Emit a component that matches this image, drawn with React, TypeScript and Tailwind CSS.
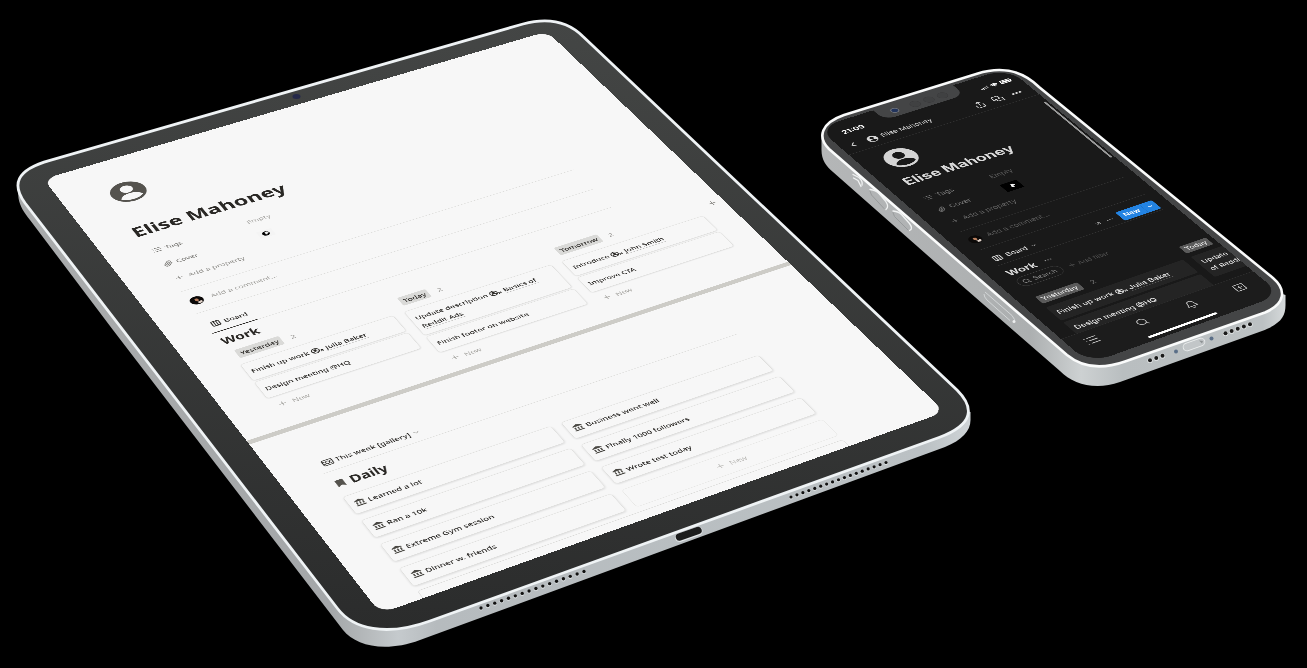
import { useLayoutEffect, useRef, useState, type CSSProperties, type ReactNode } from "react";
import {
  ArrowUpRight,
  Bell,
  ChevronDown,
  ChevronLeft,
  Columns3,
  Ellipsis,
  List,
  MessagesSquare,
  Paperclip,
  Plus,
  Search,
  Share,
  SquarePlus,
  Wifi,
} from "lucide-react";
import { FaBatteryFull, FaBookmark } from "react-icons/fa";
import { MdAccountBalance } from "react-icons/md";

type Point = [number, number];
type Quad = [Point, Point, Point, Point];

const SCENE_WIDTH = 1307;

/* Corners in scene units: top left, top right, bottom right, bottom left. */
const TABLET: Quad = [[43.5, 179], [547, 31.5], [945, 412], [380.5, 613.5]];
const PHONE: Quad = [[817.6, 127.8], [1007.6, 68.1], [1281.4, 294.6], [1089.4, 363.6]];

/* Perspective matrix that lays a flat w × h panel onto four corners. */
function project(w: number, h: number, quad: Quad, scale: number): CSSProperties {
  const [[x0, y0], [x1, y1], [x2, y2], [x3, y3]] = quad.map(([x, y]) => [x * scale, y * scale]);
  const dx1 = x1 - x2, dx2 = x3 - x2, sx = x0 - x1 + x2 - x3;
  const dy1 = y1 - y2, dy2 = y3 - y2, sy = y0 - y1 + y2 - y3;
  const den = dx1 * dy2 - dx2 * dy1;
  const g = (sx * dy2 - dx2 * sy) / den;
  const k = (dx1 * sy - sx * dy1) / den;
  const m = [
    (x1 - x0 + g * x1) / w, (y1 - y0 + g * y1) / w, 0, g / w,
    (x3 - x0 + k * x3) / h, (y3 - y0 + k * y3) / h, 0, k / h,
    0, 0, 1, 0,
    x0, y0, 0, 1,
  ];
  return { transform: `matrix3d(${m.join(",")})` };
}

function UserCircle({ className, ink }: { className: string; ink: string }) {
  return (
    <svg viewBox="0 0 72 72" className={className} aria-hidden="true">
      <circle cx="36" cy="36" r="36" fill="currentColor" />
      <circle cx="36" cy="26" r="13" fill={ink} />
      <path d="M13 56c4-10 13-14 23-14s19 4 23 14c-6 6-14 9-23 9s-17-3-23-9z" fill={ink} />
    </svg>
  );
}

function Portrait({ className }: { className: string }) {
  return (
    <svg viewBox="0 0 28 28" className={className} aria-hidden="true">
      <circle cx="14" cy="14" r="14" fill="#0b0908" />
      <path d="M12 8c5-2 7 2 6 6-1 4-4 5-6 2-2-3-2-6 0-8z" fill="#b9805f" />
      <path d="M13 19c3 1 6 0 9-2l2 5c-4 4-7 4-10 2z" fill="#e3d5cc" />
    </svg>
  );
}

function CoverThumb({ className }: { className: string }) {
  return (
    <svg viewBox="0 0 34 26" className={className} role="img" aria-label="Cover">
      <rect width="34" height="26" fill="currentColor" />
      <circle cx="17" cy="13" r="8" fill="#000" />
      <path d="M16 8c4-2 8 0 8 4l-4 1 0 4c-4 1-6-1-4-5z" fill="#f1f1f1" />
    </svg>
  );
}

function GalleryIcon({ className }: { className: string }) {
  return (
    <svg viewBox="0 0 20 20" className={className} fill="none" stroke="currentColor" strokeWidth="1.600" aria-hidden="true">
      <rect x="1.500" y="3" width="17" height="14" rx="2.500" />
      <circle cx="10" cy="10" r="3.500" />
      <path d="M2 7h4M14 7h4M2 13h4M14 13h4" />
    </svg>
  );
}

function Mention({ children }: { children: ReactNode }) {
  return (
    <a href="#mention" className="whitespace-normal">
      <span className="mr-1 inline-flex items-end align-[-3px]">
        <svg viewBox="0 0 18 18" className="size-4" aria-hidden="true">
          <circle cx="9" cy="9" r="7.500" fill="none" stroke="currentColor" strokeWidth="2" />
          <circle cx="9" cy="7" r="3" fill="currentColor" />
          <path d="M3 14c3-5 9-5 12 0" fill="none" stroke="currentColor" strokeWidth="2" />
        </svg>
        <ArrowUpRight className="-ml-0.5 size-[9px]" strokeWidth={4} />
      </span>
      <span className="border-b border-current/30">{children}</span>
    </a>
  );
}

/* ---------- Tablet ---------- */

function PropertyRow({ icon, name, children }: { icon: ReactNode; name: string; children?: ReactNode }) {
  return (
    <div className="flex h-12 items-center text-[15px] text-[#73726e]">
      <div className="flex w-[180px] items-center gap-1.5">
        {icon}
        <span>{name}</span>
      </div>
      {children}
    </div>
  );
}

function BoardColumn({ title, cards }: { title: string; cards: { id: string; body: ReactNode }[] }) {
  return (
    <section className="w-[284px] shrink-0">
      <div className="flex items-center gap-4 pl-2">
        <h3 className="h-[26px] rounded-sm bg-[#dadad8] px-1.5 text-[15px] leading-[26px] font-medium text-[#2a2825]">{title}</h3>
        <span className="text-[15px] text-[#9b9a97]">2</span>
      </div>
      <div className="mt-4 flex flex-col gap-1">
        {cards.map((card) => (
          <article
            key={card.id}
            className="rounded-md border border-[#dfdfdd] px-2 py-3 text-[15px] leading-[26px] font-medium text-[#2a2825] shadow-[0_1px_3px_rgba(15,15,15,0.12)]"
          >
            {card.body}
          </article>
        ))}
      </div>
      <button type="button" className="flex h-12 items-center gap-2 pl-2 text-[15px] text-[#a5a4a0]">
        <Plus className="size-[18px]" /> New
      </button>
    </section>
  );
}

const BOARD = [
  {
    title: "Yesterday",
    cards: [
      { id: "finish", body: <>Finish up work <Mention>Julia Baker</Mention></> },
      { id: "design", body: "Design meeting @HQ" },
    ],
  },
  {
    title: "Today",
    cards: [
      { id: "update", body: <>Update description <Mention>Basics of Reddit Ads</Mention></> },
      { id: "footer", body: "Finish footer on website" },
    ],
  },
  {
    title: "Tomorrow",
    cards: [
      { id: "intro", body: <>Introduce <Mention>John Smith</Mention></> },
      { id: "cta", body: "Improve CTA" },
    ],
  },
];

const GALLERY = [
  "Learned a lot",
  "Business went well",
  "Ran a 10k",
  "Finally 1000 followers",
  "Extreme Gym session",
  "Wrote test today",
  "Dinner w. friends",
];

function TabletPage() {
  return (
    <div className="flex h-full flex-col bg-[#f7f7f7] pt-20 font-['Noto_Sans','Open_Sans',sans-serif] text-[#2a2825]">
      <header className="mr-[184px] ml-[72px]">
        <UserCircle className="ml-3 size-[65px] text-[#55534e]" ink="#f7f7f7" />
        <h1 className="mt-[66px] text-[41px] leading-[52px] font-bold">Elise Mahoney</h1>
        <div className="mt-[18px] border-b border-[#dcdcda] pb-4 pl-2">
          <PropertyRow icon={<List className="size-[18px]" />} name="Tags">
            <span className="text-[#aaa9a6]">Empty</span>
          </PropertyRow>
          <PropertyRow icon={<Paperclip className="size-[18px]" />} name="Cover">
            <CoverThumb className="h-[22px] w-[30px] text-[#f4f4f4]" />
          </PropertyRow>
          <button type="button" className="flex h-12 items-center gap-2 text-[15px] text-[#91908c]">
            <Plus className="size-[18px]" /> Add a property
          </button>
        </div>
        <div className="flex h-[72px] items-center gap-3.5 border-b border-[#dcdcda] pl-1">
          <Portrait className="size-6" />
          <input
            aria-label="Add a comment on tablet"
            placeholder="Add a comment..."
            className="flex-1 bg-transparent text-[15px] outline-none placeholder:text-[#9d9c98]"
          />
        </div>
        <nav className="flex h-[66px] items-end border-b border-[#dcdcda]">
          <button type="button" className="-mb-px flex h-12 items-center gap-1.5 border-b-2 border-[#2a2825] px-2 text-[15px] font-medium">
            <Columns3 className="size-[18px]" strokeWidth={2.5} /> Board
          </button>
        </nav>
      </header>

      <section className="ml-[76px]">
        <h2 className="mt-2.5 mb-3.5 text-[26px] leading-9 font-bold">Work</h2>
        <div className="flex gap-5">
          {BOARD.map((column) => (
            <BoardColumn key={column.title} {...column} />
          ))}
          <button type="button" aria-label="Add a group" className="flex h-8 items-center pl-1 text-[#7d7c78]">
            <Plus className="size-5" />
          </button>
        </div>
      </section>

      <hr className="mt-3 h-[11px] shrink-0 border-0 bg-[#cdccc7]" />

      <section className="mt-20 mr-[184px] ml-[72px]">
        <nav className="flex h-12 items-center border-b border-[#dcdcda] pl-2">
          <button type="button" className="flex items-center gap-1 text-[15px] font-medium">
            <GalleryIcon className="size-5" /> This week [gallery]
            <ChevronDown className="size-4 text-[#a5a4a0]" />
          </button>
        </nav>
        <h2 className="flex h-[68px] items-center gap-2 pl-1 text-[26px] font-bold">
          <FaBookmark className="size-[18px] text-[#55534e]" /> Daily
        </h2>
        <div className="grid grid-cols-2 gap-x-[18px] gap-y-[17px]">
          {GALLERY.map((name) => (
            <article
              key={name}
              className="flex h-[50px] items-center gap-1 rounded-md border border-[#dfdfdd] px-2 text-[15px] font-medium shadow-[0_2px_4px_rgba(15,15,15,0.13)]"
            >
              <MdAccountBalance className="size-5 text-[#4a4843]" /> {name}
            </article>
          ))}
          <button
            type="button"
            className="flex h-[50px] items-center justify-center gap-2 rounded-md border border-[#e6e6e4] text-[15px] text-[#bbbab7]"
          >
            <Plus className="size-[18px]" /> New
          </button>
        </div>
        <div className="mt-3 h-12 rounded-md border border-[#d8d8d6]" />
      </section>
    </div>
  );
}

/* ---------- Phone ---------- */

function PhonePage() {
  return (
    <div className="relative flex h-full flex-col bg-[#191919] font-[Inter,'Noto_Sans',sans-serif] text-[#d8d8d8]">
      <div className="absolute top-0 left-[112px] flex h-[37px] w-[164px] items-center gap-2 rounded-b-[22px] bg-[#444546] pl-6">
        <span className="size-4 rounded-full border-2 border-[#6c7078] bg-[#22345c]" />
        <span className="ml-4 size-5 rounded-full border border-[#38383a] bg-[#404142]" />
        <span className="size-5 rounded-full border border-[#38383a] bg-[#404142]" />
        <span className="size-5 rounded-full border border-[#38383a] bg-[#404142]" />
      </div>
      <div className="absolute top-[127px] right-1 h-[212px] w-1 rounded bg-[#9a9a9a]" />

      <div className="flex h-[54px] shrink-0 items-center justify-between pt-4 pr-4 pl-7 text-[16px] font-bold text-white">
        <time>21:09</time>
        <span className="flex items-center gap-1.5">
          <svg viewBox="0 0 18 12" className="h-2.5 w-4" fill="currentColor" aria-hidden="true">
            <rect y="8" width="3" height="4" />
            <rect x="5" y="6" width="3" height="6" />
            <rect x="10" y="3" width="3" height="9" opacity="0.5" />
            <rect x="15" width="3" height="12" opacity="0.5" />
          </svg>
          <Wifi className="size-3.5" strokeWidth={4} />
          <FaBatteryFull className="size-[22px]" />
        </span>
      </div>

      <nav className="flex h-12 shrink-0 items-center gap-4 border-b border-[#333] pr-5 pl-3">
        <button type="button" aria-label="Back"><ChevronLeft className="size-6" /></button>
        <span className="flex flex-1 items-center gap-2 text-[15px]">
          <UserCircle className="size-5 text-[#d8d8d8]" ink="#191919" /> Elise Mahoney
        </span>
        <button type="button" aria-label="Share"><Share className="size-[22px]" /></button>
        <button type="button" aria-label="Comments"><MessagesSquare className="size-[22px]" /></button>
        <button type="button" aria-label="More"><Ellipsis className="size-6" strokeWidth={3} /></button>
      </nav>

      <header className="mr-[23px] ml-[30px] shrink-0 pt-[22px]">
        <UserCircle className="ml-3 size-[60px] text-[#d4d4d4]" ink="#191919" />
        <h1 className="mt-5 pl-1 text-[31px] leading-10 font-bold">Elise Mahoney</h1>
        <div className="mt-5 border-b border-[#333] pb-3 pl-1.5 text-[15px] text-[#7c7c7c]">
          <div className="flex h-[42px] items-center">
            <span className="flex w-[133px] items-center gap-2"><List className="size-4" /> Tags</span>
            <span className="text-[#5a5a5a]">Empty</span>
          </div>
          <div className="flex h-[42px] items-center">
            <span className="flex w-[133px] items-center gap-2"><Paperclip className="size-4" /> Cover</span>
            <CoverThumb className="h-[26px] w-[34px] text-black" />
          </div>
          <button type="button" className="flex h-[42px] items-center gap-2 text-[#666]"><Plus className="size-4" /> Add a property</button>
        </div>
        <div className="flex h-16 items-center gap-3 border-b border-[#333]">
          <Portrait className="size-6" />
          <input
            aria-label="Add a comment on phone"
            placeholder="Add a comment..."
            className="flex-1 bg-transparent text-[15px] outline-none placeholder:text-[#5a5a5a]"
          />
        </div>
        <div className="flex h-14 items-end border-b border-[#333] pb-1">
          <button type="button" className="flex h-8 flex-1 items-center gap-2 pl-1 text-[15px] font-medium">
            <Columns3 className="size-[18px]" strokeWidth={2.5} /> Board <ChevronDown className="size-3" />
          </button>
          <button type="button" aria-label="Open view" className="flex h-8 items-center px-2 text-[#9a9a9a]"><ArrowUpRight className="size-4" /></button>
          <button type="button" aria-label="View options" className="mr-3 flex h-8 items-center text-[#9a9a9a]"><Ellipsis className="size-4" /></button>
          <div className="flex h-[30px] overflow-hidden rounded-sm bg-[#2383e2] text-[15px] font-semibold text-white">
            <button type="button" className="px-2">New</button>
            <button type="button" aria-label="New options" className="border-l border-[#1a6fc4] px-1.5"><ChevronDown className="size-3.5" /></button>
          </div>
        </div>
        <h2 className="mt-2.5 flex h-9 items-center gap-4 text-[22px] font-bold">
          Work <Ellipsis className="size-[18px] text-[#9a9a9a]" />
        </h2>
        <div className="flex h-8 items-center gap-3 text-[14px] text-[#6c6c6c]">
          <label className="flex h-[30px] w-[88px] items-center gap-1.5 rounded-full border border-[#444] px-2">
            <Search className="size-[15px] shrink-0 text-[#aaa]" />
            <input aria-label="Search" placeholder="Search" className="w-full min-w-0 bg-transparent outline-none placeholder:text-[#8a8a8a]" />
          </label>
          <button type="button" className="flex items-center gap-1 text-[#505050]"><Plus className="size-4" /> Add filter</button>
        </div>
      </header>

      <div className="mt-8 ml-[30px] flex min-h-0 flex-1 gap-4 overflow-hidden text-[16px] font-medium text-[#e0e0e0]">
        <section className="w-[278px] shrink-0">
          <div className="flex items-center gap-5 pl-0.5">
            <h3 className="h-6 rounded-sm bg-[#5a5a5a] px-1.5 text-[15px] leading-6">Yesterday</h3>
            <span className="text-[14px] text-[#6c6c6c]">2</span>
          </div>
          <article className="mt-3 rounded bg-[#242424] px-2 leading-[46px]">Finish up work <Mention>Julia Baker</Mention></article>
          <article className="mt-1.5 rounded bg-[#242424] px-2 leading-[46px]">Design meeting @HQ</article>
        </section>
        <section className="flex w-[278px] shrink-0 flex-col items-start">
          <h3 className="h-6 rounded-sm bg-[#5a5a5a] px-1.5 text-[15px] leading-6">Today</h3>
          <article className="mt-3 w-full rounded bg-[#242424] px-2 py-2.5 text-[15px] leading-[26px]">Update<br />of Reddi</article>
        </section>
      </div>

      <nav className="flex h-[84px] shrink-0 flex-col items-center border-t border-[#303030] bg-[#1c1c1c]">
        <div className="flex h-[56px] w-full items-center justify-between pr-9 pl-7 text-[#b8b8b8]">
          <button type="button" aria-label="Menu"><List className="size-7" /></button>
          <button type="button" aria-label="Search pages"><Search className="size-6" /></button>
          <button type="button" aria-label="Notifications"><Bell className="size-6" /></button>
          <button type="button" aria-label="New page"><SquarePlus className="size-6" /></button>
        </div>
        <div className="mt-3 h-[6px] w-[139px] rounded-full bg-white" />
      </nav>
    </div>
  );
}

/* ---------- Device bodies ---------- */

function dots(count: number, from: Point, to: Point): Point[] {
  return Array.from({ length: count }, (_, i) => [
    from[0] + ((to[0] - from[0]) * i) / (count - 1),
    from[1] + ((to[1] - from[1]) * i) / (count - 1),
  ]);
}

const TABLET_TOP =
  "M337.5 608.5L25 203C12 185 15 170 50 160.3L523 24C545 18 566 19.500 583 36.500L957 390C974 407 975 424 939 437.5L430 621C386 637 353 629 337.5 608.5Z";
const PHONE_TOP =
  "M961 263.5L829 149C817 137 821 123 844 115L977 73.7C1005 65 1025 73 1039 87L1273 278C1287 290 1285 304 1265 312.5L1125 361.5C1101 370 1081 366.500 1067 355Z";

function Bodies() {
  return (
    <svg viewBox="0 0 1307 668" className="block w-full" aria-hidden="true">
      <defs>
        <linearGradient id="tabletSide" gradientUnits="userSpaceOnUse" x1="16" y1="0" x2="972" y2="0">
          <stop offset="0" stopColor="#a9abac" />
          <stop offset="0.33" stopColor="#a4a7a9" />
          <stop offset="0.37" stopColor="#b7bbbd" />
          <stop offset="0.4" stopColor="#c5cacd" />
          <stop offset="0.44" stopColor="#b6bbbe" />
          <stop offset="0.95" stopColor="#bbc1c4" />
          <stop offset="1" stopColor="#cfd4d7" />
        </linearGradient>
        <linearGradient id="tabletFace" x1="0" y1="0" x2="0" y2="1">
          <stop offset="0" stopColor="#444645" />
          <stop offset="1" stopColor="#2b2c2c" />
        </linearGradient>
        <linearGradient id="phoneSide" gradientUnits="userSpaceOnUse" x1="820" y1="0" x2="1286" y2="0">
          <stop offset="0" stopColor="#b4b6b7" />
          <stop offset="0.45" stopColor="#acafb0" />
          <stop offset="0.56" stopColor="#cdd1d2" />
          <stop offset="0.65" stopColor="#b9bec0" />
          <stop offset="0.95" stopColor="#bcc1c3" />
          <stop offset="1" stopColor="#d6dadb" />
        </linearGradient>
      </defs>

      <path d="M17.500 186L18.500 198C20 207 24 212 30 220L113 330L343 630C356 646 385 653 420 640L945 447C962 440 970.500 431 970.500 420V412L500 300Z" fill="url(#tabletSide)" />
      <path d={TABLET_TOP} fill="url(#tabletFace)" stroke="#eff3f5" strokeWidth="2.800" />
      <ellipse cx="296.5" cy="96.500" rx="4" ry="2.5" fill="#25294a" />
      {dots(16, [481, 608], [584, 571.5]).map(([x, y]) => (
        <g key={x}>
          <circle cx={x} cy={y + 0.6} r="2" fill="#dfe3e5" />
          <circle cx={x} cy={y} r="1.7" fill="#111" />
        </g>
      ))}
      {dots(17, [791, 497], [886, 462.5]).map(([x, y]) => (
        <g key={x}>
          <circle cx={x} cy={y + 0.6} r="1.9" fill="#dfe3e5" />
          <circle cx={x} cy={y} r="1.6" fill="#111" />
        </g>
      ))}
      <path d="M679.500 537.500L698 531" stroke="#e4e8ea" strokeWidth="9" strokeLinecap="round" />
      <path d="M679.500 537L698 530.500" stroke="#1c1d1d" strokeWidth="7.500" strokeLinecap="round" />

      <path d="M821.500 134V150C821.500 160 826 166 833 172L960 284L1060 371C1073 384 1095 391 1120 382L1262 331C1280 324 1285.500 317 1285.500 305V295L1000 200Z" fill="url(#phoneSide)" />
      <path d={PHONE_TOP} fill="#444546" stroke="#fafbfb" strokeWidth="2.600" />
      <g fill="none" stroke="#f1f3f3" strokeWidth="1.300" strokeLinecap="round" strokeLinejoin="round">
        <path d="M853 174.500L859 177.500Q863 181 862 185M853.500 178L858 180.500L861 186.500" />
        <path d="M870 189.500Q876 190 879 193.500L885.500 201Q889.500 207 886 209.500" />
        <path d="M893 211Q899 211.500 902 215L909.500 223.500Q913.500 229 909.500 230.500" />
      </g>
      <g fill="none" stroke="#989b9c" strokeWidth="1" strokeLinecap="round">
        <path d="M870 191L871.500 195L884 208.500" />
        <path d="M893 212.500L894.500 216.500L908 230" />
      </g>
      <path d="M985 292L1012 315.500Q1016 320 1014 322.500M984 294Q984 297 987 300L1010 320.500" fill="none" stroke="#d3d6d7" />
      <circle cx="1014" cy="321.500" r="1.500" fill="#eceeee" />
      {[...dots(3, [1150, 360.5], [1162.500, 356]), ...dots(5, [1225.500, 333.500], [1250, 324.500])].map(([x, y]) => (
        <g key={x}>
          <circle cx={x} cy={y} r="2.600" fill="#e4e7e8" />
          <circle cx={x} cy={y - 0.3} r="2" fill="#1a1a1a" />
        </g>
      ))}
      <circle cx="1176" cy="351.500" r="2" fill="#5b6f88" />
      <circle cx="1211.500" cy="338.500" r="2" fill="#5b6f88" />
      <path d="M1187 347L1201 342" stroke="#eff1f1" strokeWidth="8.500" strokeLinecap="round" />
      <path d="M1187 347L1201 342" stroke="#c2c6c8" strokeWidth="7" strokeLinecap="round" />
      <path d="M1199 340.500L1203 341L1202 343.500Z" fill="#8d9193" />
    </svg>
  );
}

export default function App() {
  const scene = useRef<HTMLDivElement>(null);
  const [scale, setScale] = useState(1);

  useLayoutEffect(() => {
    const node = scene.current;
    if (!node) return;
    const measure = () => setScale(node.clientWidth / SCENE_WIDTH);
    measure();
    const observer = new ResizeObserver(measure);
    observer.observe(node);
    return () => observer.disconnect();
  }, []);

  return (
    <main className="min-h-screen overflow-hidden bg-black">
      <div ref={scene} className="relative w-full">
        <Bodies />
        <div
          className="absolute top-0 left-0 h-[1366px] w-[1024px] origin-top-left overflow-hidden rounded-[26px]"
          style={project(1024, 1366, TABLET, scale)}
        >
          <TabletPage />
        </div>
        <div
          className="absolute top-0 left-0 h-[844px] w-[390px] origin-top-left overflow-hidden rounded-[44px]"
          style={project(390, 844, PHONE, scale)}
        >
          <PhonePage />
        </div>
      </div>
    </main>
  );
}
